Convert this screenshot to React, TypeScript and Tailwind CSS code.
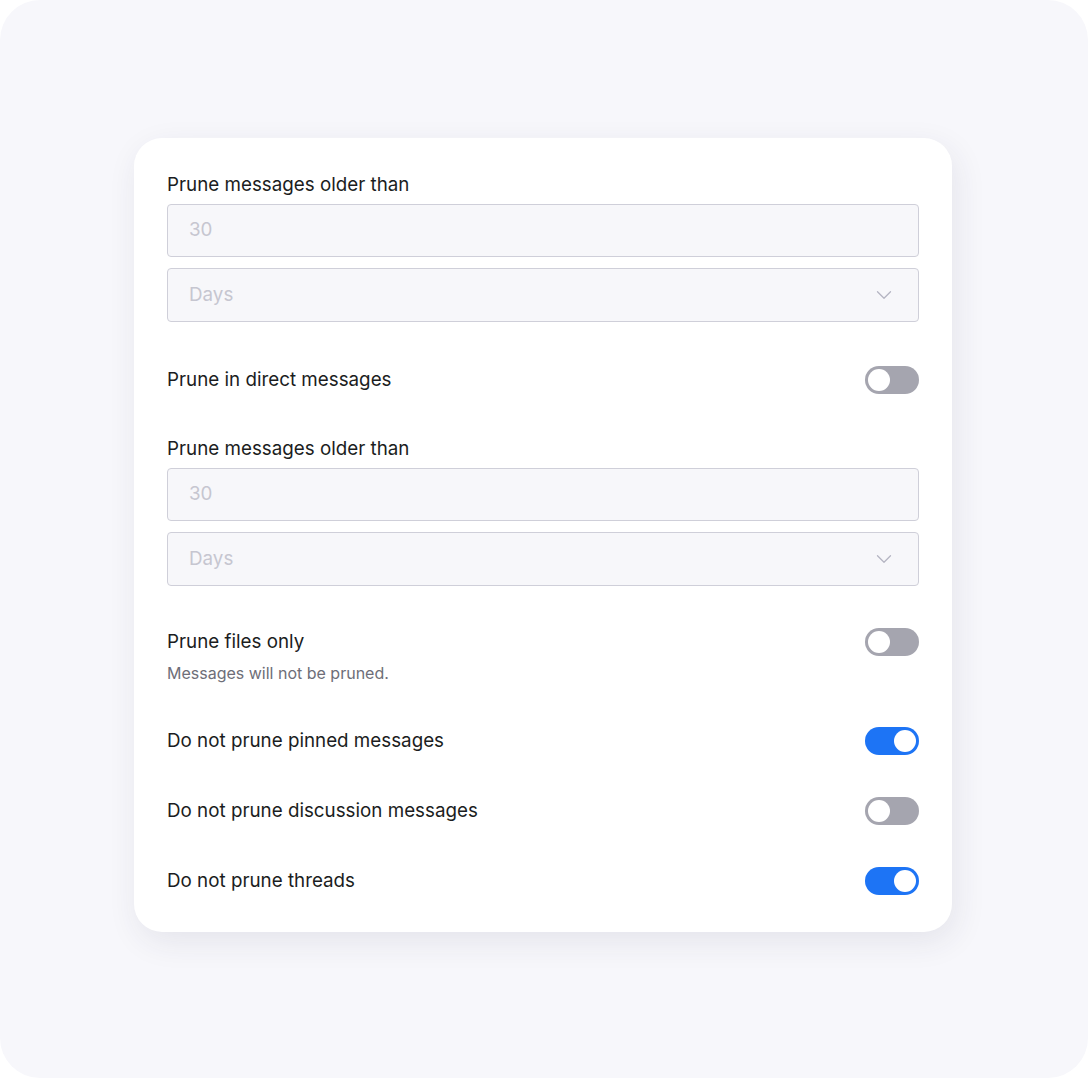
import { ChevronDown } from "lucide-react";

const Toggle = ({ on }: { on: boolean }) => {
  return (
    <div
      className={
        on
          ? "w-[54px] h-[28px] rounded-full bg-[#1d74f5] relative shrink-0"
          : "w-[54px] h-[28px] rounded-full bg-[#a5a5af] relative shrink-0"
      }
    >
      <div
        className={
          on
            ? "absolute top-[3px] right-[3px] w-[22px] h-[22px] rounded-full bg-white"
            : "absolute top-[3px] left-[3px] w-[22px] h-[22px] rounded-full bg-white"
        }
      ></div>
    </div>
  );
};

const PruneFields = () => {
  return (
    <div className="flex flex-col">
      <label className="text-[18.8px] leading-[24px] text-[#1b1d21]">
        Prune messages older than
      </label>
      <div className="mt-[7px] h-[53px] rounded-[4px] border border-[#cfcfd9] bg-[#f7f7fa] px-[21px] flex items-center text-[18.8px] text-[#c6c6d0]">
        30
      </div>
      <div className="mt-[11px] h-[54px] rounded-[4px] border border-[#cfcfd9] bg-[#f7f7fa] pl-[21px] pr-[21px] flex items-center justify-between text-[18.8px] text-[#c6c6d0]">
        <span>Days</span>
        <ChevronDown size={26} strokeWidth={1.2} className="text-[#b5b5c2]" />
      </div>
    </div>
  );
};

const ToggleRow = ({ label, on }: { label: string; on: boolean }) => {
  return (
    <div className="h-[28px] flex items-center justify-between">
      <span className="text-[18.8px] leading-[24px] text-[#1b1d21]">{label}</span>
      <Toggle on={on} />
    </div>
  );
};

const App = () => {
  return (
    <div
      className="w-[1088px] h-[1078px] bg-white"
      style={{ fontFamily: "Inter, 'Noto Sans', sans-serif" }}
    >
      <div className="w-full h-full rounded-[40px] bg-[#f7f7fb] flex justify-center pt-[138px]">
        <div className="w-[818px] h-[794px] ml-[-2px] rounded-[28px] bg-white shadow-[4px_10px_32px_rgba(40,40,80,0.09)] px-[33px] pt-[35px] flex flex-col">
          <PruneFields />
          <div className="mt-[44px]">
            <ToggleRow label="Prune in direct messages" on={false} />
          </div>
          <div className="mt-[43px]">
            <PruneFields />
          </div>
          <div className="mt-[42px]">
            <ToggleRow label="Prune files only" on={false} />
            <p className="mt-[7px] text-[16px] leading-[20px] text-[#6e6e78]">
              Messages will not be pruned.
            </p>
          </div>
          <div className="mt-[44px]">
            <ToggleRow label="Do not prune pinned messages" on={true} />
          </div>
          <div className="mt-[42px]">
            <ToggleRow label="Do not prune discussion messages" on={false} />
          </div>
          <div className="mt-[42px]">
            <ToggleRow label="Do not prune threads" on={true} />
          </div>
        </div>
      </div>
    </div>
  );
};

export default App;
